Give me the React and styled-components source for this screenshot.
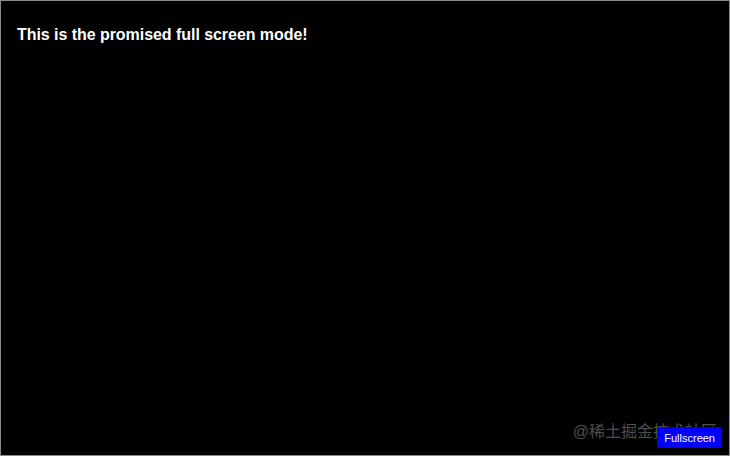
import styled, { createGlobalStyle } from "styled-components";

const Global = createGlobalStyle`
    html, body {
        margin: 0;
        padding: 0;
        background: #ffffff;
    }
    #root {
        width: 730px;
        height: 456px;
    }
`;

export default function App(){
    return(
        <>
            <Global />
            <Screen>
                <Title>This is the promised full screen mode!</Title>
                <Watermark>@稀土掘金技术社区</Watermark>
                <FullscreenButton>Fullscreen</FullscreenButton>
            </Screen>
        </>
    );
}

const Screen = styled.div`
    position: relative;
    width: 730px;
    height: 456px;
    box-sizing: border-box;
    border: 1px solid #8a8a8a;
    background-color: #000000;
    padding: 16px 7px 7px 16px;
    display: flex;
    flex-direction: column;
    font-family: "Liberation Sans", Arial, sans-serif;
`;

const Title = styled.h1`
    margin: 8px 0 0 0;
    font-size: 16px;
    font-weight: 700;
    color: #ffffff;
    line-height: 20px;
    letter-spacing: -0.05px;
`;

const Watermark = styled.span`
    position: absolute;
    right: 12px;
    bottom: 13px;
    font-family: "Liberation Sans", "Noto Sans CJK SC", sans-serif;
    font-size: 16px;
    color: rgba(255, 255, 255, 0.33);
    line-height: 20px;
    pointer-events: none;
`;

const FullscreenButton = styled.button`
    position: relative;
    margin-top: auto;
    align-self: flex-end;
    height: 21px;
    padding: 0 7px;
    border: none;
    border-radius: 2px;
    background-color: #0000ff;
    color: #ffffff;
    font-family: "Liberation Sans", Arial, sans-serif;
    font-size: 11px;
`;
